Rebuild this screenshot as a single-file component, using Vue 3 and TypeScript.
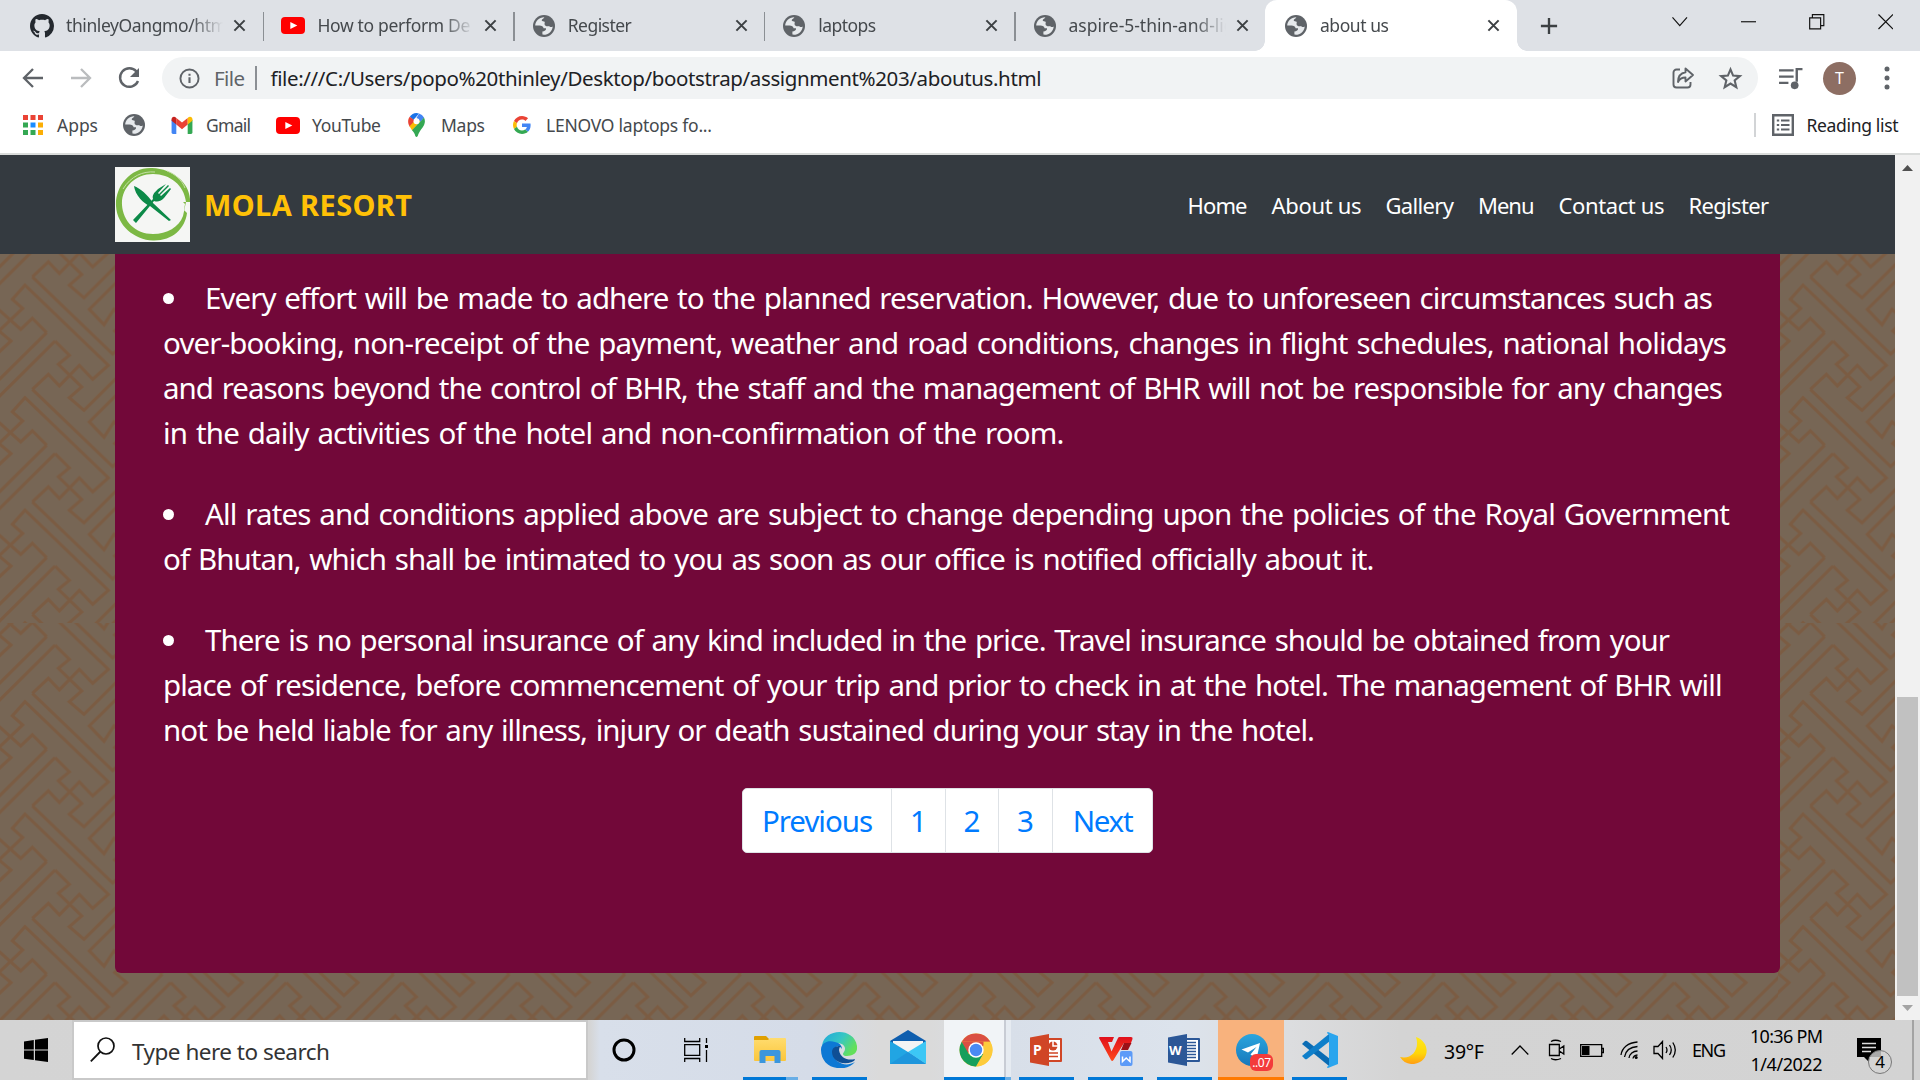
<script setup lang="ts">
import type { Directive } from 'vue'

/* Spreads a single line of text over the given width by adjusting its tracking. */
const vFit: Directive<HTMLElement, number> = {
  mounted(el, { value }) {
    const count = (el.textContent ?? '').length
    const natural = el.getBoundingClientRect().width
    if (count > 1) el.style.letterSpacing = `${(value - natural) / (count - 1)}px`
    el.style.width = `${value}px`
  },
}

interface Tab { title: string; icon: 'github' | 'youtube' | 'globe'; width: number }
const tabs: Tab[] = [
  { title: 'thinleyOangmo/htm', icon: 'github', width: 161 },
  { title: 'How to perform De', icon: 'youtube', width: 153 },
  { title: 'Register', icon: 'globe', width: 64 },
  { title: 'laptops', icon: 'globe', width: 58 },
  { title: 'aspire-5-thin-and-lig', icon: 'globe', width: 166 },
]

const links = [
  { label: 'Home', width: 60 },
  { label: 'About us', width: 90 },
  { label: 'Gallery', width: 68.5 },
  { label: 'Menu', width: 56.5 },
  { label: 'Contact us', width: 106 },
  { label: 'Register', width: 80.5 },
]

const terms = [
  [
    { text: 'Every effort will be made to adhere to the planned reservation. However, due to unforeseen circumstances such as', width: 1508 },
    { text: 'over-booking, non-receipt of the payment, weather and road conditions, changes in flight schedules, national holidays', width: 1564 },
    { text: 'and reasons beyond the control of BHR, the staff and the management of BHR will not be responsible for any changes', width: 1560 },
    { text: 'in the daily activities of the hotel and non-confirmation of the room.', width: 901.5 },
  ],
  [
    { text: 'All rates and conditions applied above are subject to change depending upon the policies of the Royal Government', width: 1525 },
    { text: 'of Bhutan, which shall be intimated to you as soon as our office is notified officially about it.', width: 1211.5 },
  ],
  [
    { text: 'There is no personal insurance of any kind included in the price. Travel insurance should be obtained from your', width: 1465 },
    { text: 'place of residence, before commencement of your trip and prior to check in at the hotel. The management of BHR will', width: 1559.5 },
    { text: 'not be held liable for any illness, injury or death sustained during your stay in the hotel.', width: 1152 },
  ],
]

const pages = [
  { label: 'Previous', box: 149, width: 111 },
  { label: '1', box: 54, width: 0 },
  { label: '2', box: 53, width: 0 },
  { label: '3', box: 54, width: 0 },
  { label: 'Next', box: 99, width: 61 },
]

const tileOffsets = [-1, 0, 1, 2].flatMap((i) => [-2, -1, 0, 1, 2].map((j) => ({ x: i * 347, y: j * 337.5 })))
</script>

<template>
  <div class="screen">
    <svg class="defs" width="0" height="0" aria-hidden="true">
      <defs>
        <symbol id="i-globe" viewBox="0 0 22 22">
          <circle cx="11" cy="11" r="11" fill="#5f6368" />
          <path d="M11.4 2.2C6.400 2 2.300 6 2.200 10.500h4.200c2.400 0 3.800 1 4.200 2.800h2.400c.4 2.200-1.600 3-3.600 3.200v3.100c5 .8 10-3 10.300-8.200-1.300 1.200-3 .8-3.600-.4-1.300.5-4.300.4-4.500-1.500-.2-1.200.5-2.200 0-2.700-.9-.5-2.600-.2-2.900-1.300 0-1.700 1.900-1.600 2.700-3.300z" fill="#e6e9ec" />
        </symbol>
        <symbol id="i-yt" viewBox="0 0 24 17">
          <rect width="24" height="17" rx="4" fill="#f00" />
          <path d="M9.300 5l7 3.500-7 3.500z" fill="#fff" />
        </symbol>
        <symbol id="i-x" viewBox="0 0 14 14">
          <path d="M1.500 1.500l11 11M12.500 1.500l-11 11" stroke="#3c4043" stroke-width="2.200" fill="none" />
        </symbol>
        <linearGradient id="edgeTop" x1="0" y1="0" x2="1" y2=".5"><stop offset="0" stop-color="#1fa7dc" /><stop offset=".55" stop-color="#36c6c4" /><stop offset="1" stop-color="#63e05a" /></linearGradient>
        <linearGradient id="moon" x1="0" y1="0" x2="0" y2="1"><stop offset="0" stop-color="#ffe81a" /><stop offset=".6" stop-color="#ffd60a" /><stop offset="1" stop-color="#ff9d14" /></linearGradient>
        <linearGradient id="wps" x1="0" y1="0" x2="0" y2="1"><stop offset="0" stop-color="#e0101c" /><stop offset="1" stop-color="#ff4a1c" /></linearGradient>
        <linearGradient id="tg" x1="0" y1="0" x2="0" y2="1"><stop offset="0" stop-color="#2ba5de" /><stop offset="1" stop-color="#1778bb" /></linearGradient>
        <linearGradient id="folder" x1="0" y1="0" x2="0" y2="1"><stop offset="0" stop-color="#ffdc6e" /><stop offset="1" stop-color="#fbc63c" /></linearGradient>
      </defs>
    </svg>

    <header class="tabs">
      <div v-for="t in tabs" :key="t.title" class="tab">
        <svg v-if="t.icon === 'github'" class="fav gh" viewBox="0 0 16 16"><path fill="#24292f" d="M8 0C3.580 0 0 3.580 0 8c0 3.540 2.290 6.530 5.470 7.590.4.07.55-.17.55-.38 0-.19-.01-.82-.01-1.490-2.010.37-2.530-.49-2.690-.94-.09-.23-.48-.94-.82-1.130-.28-.15-.68-.52-.01-.53.63-.01 1.080.58 1.230.82.72 1.210 1.870.87 2.330.66.07-.52.28-.87.51-1.070-1.780-.2-3.640-.89-3.640-3.950 0-.87.31-1.590.82-2.150-.08-.2-.36-1.020.08-2.120 0 0 .67-.21 2.200.82.64-.18 1.320-.27 2-.27s1.360.09 2 .27c1.530-1.040 2.200-.82 2.200-.82.44 1.100.16 1.920.08 2.120.51.56.82 1.270.82 2.150 0 3.070-1.870 3.750-3.650 3.950.29.25.54.73.54 1.480 0 1.070-.01 1.930-.01 2.200 0 .21.15.46.55.38A8.010 8.010 0 0 0 16 8c0-4.420-3.580-8-8-8z" /></svg>
        <svg v-else-if="t.icon === 'youtube'" class="fav yt"><use href="#i-yt" /></svg>
        <svg v-else class="fav"><use href="#i-globe" /></svg>
        <div class="tab-title"><span v-fit="t.width">{{ t.title }}</span></div>
        <svg class="x"><use href="#i-x" /></svg>
      </div>
      <div class="tab active">
        <svg class="fav"><use href="#i-globe" /></svg>
        <div class="tab-title"><span v-fit="69">about us</span></div>
        <svg class="x"><use href="#i-x" /></svg>
      </div>
      <svg class="plus" viewBox="0 0 20 20"><path d="M10 1v18M1 10h18" stroke="#3c4043" stroke-width="2.600" /></svg>
      <div class="win">
        <svg viewBox="0 0 16 16"><path d="M.5 3.500L8 12l7.500-8.500" /></svg>
        <svg viewBox="0 0 16 16"><path d="M0 8h16" /></svg>
        <svg viewBox="0 0 16 16"><path d="M.7 4h11.300v11.300H.7zM3.500 4V.7h11.800V12H12" /></svg>
        <svg viewBox="0 0 16 16"><path d="M.5.5l15 15M15.500.5l-15 15" /></svg>
      </div>
    </header>

    <div class="toolbar">
      <svg class="nav-i" viewBox="0 0 24 24"><path d="M22 12H3M12 3l-9 9 9 9" fill="none" stroke="#5f6368" stroke-width="2.300" /></svg>
      <svg class="nav-i" viewBox="0 0 24 24"><path d="M2 12h19M12 3l9 9-9 9" fill="none" stroke="#babcbe" stroke-width="2.300" /></svg>
      <svg class="nav-i" viewBox="0 0 24 24"><path d="M19.500 5.500A9.300 9.300 0 1 0 21 15" fill="none" stroke="#5f6368" stroke-width="2.400" /><path d="M22 2v9h-9z" fill="#5f6368" /></svg>
      <div class="omni">
        <svg class="info" viewBox="0 0 22 22"><circle cx="11" cy="11" r="9.500" fill="none" stroke="#5f6368" stroke-width="2" /><path d="M11 9.700v6M11 6v2.200" stroke="#5f6368" stroke-width="2.200" /></svg>
        <span class="file" v-fit="31">File</span>
        <i class="bar"></i>
        <span class="url" v-fit="771">file:///C:/Users/popo%20thinley/Desktop/bootstrap/assignment%203/aboutus.html</span>
        <svg class="share" viewBox="0 0 24 24" fill="none" stroke="#5f6368" stroke-width="1.900"><path d="M9 3.500H5.500A3 3 0 0 0 2.500 6.500v12a3 3 0 0 0 3 3h11a3 3 0 0 0 3-3V16" /><path d="M14.500 2.500l7.500 6.500-7.500 6.500v-4c-3.500 0-6 1.200-7.500 4.500 0-6 3-9 7.500-9.800z" stroke-linejoin="round" /></svg>
        <svg class="star" viewBox="0 0 24 24"><path d="M12 3.200l2.500 6 6.500.5-5 4.200 1.600 6.400-5.600-3.500-5.600 3.500L8 13.900 3 9.700l6.500-.5z" fill="none" stroke="#5f6368" stroke-width="2" /></svg>
      </div>
      <svg class="music" viewBox="0 0 24 24"><path d="M1 4.200h14M1 10.200h14M1 16.200h9" stroke="#5f6368" stroke-width="2.300" /><path d="M23.500 3h-5.500v12" fill="none" stroke="#5f6368" stroke-width="2.300" /><circle cx="16" cy="18.500" r="3.700" fill="#5f6368" /></svg>
      <div class="avatar">T</div>
      <svg class="dots" viewBox="0 0 6 24"><circle cx="3" cy="3" r="2.500" /><circle cx="3" cy="12" r="2.500" /><circle cx="3" cy="21" r="2.500" /></svg>
    </div>

    <div class="marks">
      <svg class="apps" viewBox="0 0 20 20">
        <path d="M0 0h5v5H0zM7.500 0h5v5h-5zM15 0h5v5h-5z" fill="#ea4335" /><path d="M0 7.500h5v5H0zM0 15h5v5H0zM7.500 15h5v5h-5z" fill="#34a853" />
        <path d="M7.500 7.500h5v5h-5z" fill="#1a8cff" /><path d="M15 7.500h5v5h-5zM15 15h5v5h-5z" fill="#fbae05" />
      </svg>
      <span class="m-apps" v-fit="41">Apps</span>
      <svg class="m-globe"><use href="#i-globe" /></svg>
      <svg class="gmail" viewBox="0 0 22 19"><path d="M0 4v13.500Q0 19 1.500 19H5V8z" fill="#4285f4" /><path d="M22 4v13.500q0 1.500-1.500 1.500H17V8z" fill="#34a853" /><path d="M5 2l6 4.900L17 2v7l-6 5-6-5z" fill="#ea4335" /><path d="M0 3.500C0 .8 2.800-.5 5 2v7L0 5z" fill="#c5221f" /><path d="M22 3.500C22 .8 19.200-.5 17 2v7l5-4z" fill="#fbbc04" /></svg>
      <span class="m-gmail" v-fit="45">Gmail</span>
      <svg class="m-yt"><use href="#i-yt" /></svg>
      <span class="m-yttext" v-fit="69">YouTube</span>
      <svg class="maps" viewBox="0 0 17 24"><path d="M1.800 3.800A8.400 8.400 0 0 1 11 .4L5.500 7z" fill="#1a73e8" /><path d="M1.800 3.800C-.8 7 0 11 1.800 13.800L11 5.500 6 7z" fill="#ea4335" /><path d="M1.500 13.300L11.800 2.800 16 4.400 4.200 17.500z" fill="#fbbc04" /><path d="M16 4.400c1.800 4 .7 7-1.400 10C12 17.800 10.500 20 9.700 23q-1.200 2-2.400 0C6.800 20.500 5.500 19 4 17.300z" fill="#34a853" /><path d="M11 .4a8.400 8.400 0 0 1 5 4l-3.500 4.200L8.500 5z" fill="#4285f4" /><circle cx="8.500" cy="8.300" r="3" fill="#fff" /></svg>
      <span class="m-maps" v-fit="44">Maps</span>
      <svg class="google" viewBox="0 0 48 48"><path fill="#EA4335" d="M24 9.500c3.540 0 6.710 1.220 9.210 3.600l6.850-6.850C35.900 2.380 30.470 0 24 0 14.620 0 6.510 5.380 2.560 13.220l7.980 6.190C12.430 13.720 17.740 9.500 24 9.500z" /><path fill="#4285F4" d="M46.980 24.550c0-1.570-.15-3.090-.38-4.550H24v9.020h12.940c-.58 2.960-2.260 5.480-4.780 7.180l7.730 6c4.510-4.180 7.090-10.360 7.090-17.650z" /><path fill="#FBBC05" d="M10.530 28.590A14.500 14.500 0 0 1 9.770 24c0-1.600.27-3.140.76-4.590l-7.980-6.190A23.900 23.900 0 0 0 0 24c0 3.880.92 7.540 2.560 10.780z" /><path fill="#34A853" d="M24 48c6.480 0 11.930-2.130 15.890-5.810l-7.730-6c-2.150 1.450-4.920 2.300-8.160 2.300-6.260 0-11.570-4.220-13.470-9.910l-7.980 6.190C6.510 42.620 14.620 48 24 48z" /></svg>
      <span class="m-lenovo" v-fit="166">LENOVO laptops fo...</span>
      <i class="m-sep"></i>
      <svg class="reading" viewBox="0 0 22 22"><path d="M1.200 1.200h19.600v19.600H1.200z" fill="none" stroke="#5f6368" stroke-width="2.400" /><path d="M4.800 6.500h2.400M4.800 11h2.400M4.800 15.500h2.400M9 6.500h8.500M9 11h8.500M9 15.500h8.500" stroke="#5f6368" stroke-width="2.200" /></svg>
      <span class="m-read" v-fit="92">Reading list</span>
    </div>

    <div class="view">
      <main class="page">
        <svg class="weave" width="1895" height="865">
          <defs>
            <pattern id="weave" patternUnits="userSpaceOnUse" width="347" height="337.5" patternTransform="scale(.33333)">
              <rect width="347" height="337.500" fill="#776655" />
              <g fill="none" stroke="#7b5c43" stroke-width="9.500">
                <g v-for="(o, i) in tileOffsets" :key="i" :transform="`translate(${o.x} ${o.y})`">
                  <path d="M-250 317.500L-9 549 33 510-3 480 68 412 37 385 75 342.500 325 583 278 625 238 583 178 645 145 610 97 655" />
                  <path d="M140 485L97 442 62 475-5 415-35 461-79 415 165 173" />
                  <path d="M165 510L208 553 175 580 245 648 208 680 252 718 487 485" />
                </g>
              </g>
            </pattern>
          </defs>
          <g transform="translate(0 128.500)"><rect y="-130" width="1778" height="470" fill="url(#weave)" /></g>
          <g transform="translate(1778 128.500)"><rect y="-130" width="118" height="470" fill="url(#weave)" /></g>
          <g transform="translate(0 545)"><rect y="-77" width="1778" height="400" fill="url(#weave)" /></g>
          <g transform="translate(1778 545)"><rect y="-77" width="118" height="400" fill="url(#weave)" /></g>
        </svg>
        <nav class="navbar">
          <svg class="logo" viewBox="0 0 75 75">
            <rect width="75" height="75" fill="#f5f6f4" />
            <path d="M37 1C15 0 0 20 1 39c1 19 18 34 37 34.500C57 74 70 62 72 46l-3-3 1-6-2-2 7 0C76 18 60 2 37 1zM38 7c17 0 31 11 33 28l-3 14c-4 11-16 18-30 18C20 67 8 54 7 38 6 21 20 7 38 7z" fill="#7cb844" fill-rule="evenodd" />
            <path d="M8 22C16 9 28 4 40 5M52 4c8 3 15 9 18 17" fill="none" stroke="#c5dfa8" stroke-width="1" />
            <path d="M19 19c6 2 14 9 19 17l18 17-2 1-19-15c-6-2-15-11-16-20z" fill="#0c8a48" />
            <path d="M18 53l20-21c-1-4 1-6 5-10l8-5-8 9 1 1 9-9 1 1-9 9 1 1 9-8 1 1-7 9c-4 4-7 4-10 3L21 56z" fill="#0c8a48" />
          </svg>
          <span class="brand" v-fit="208">MOLA RESORT</span>
          <div class="links"><a v-for="l in links" :key="l.label" v-fit="l.width">{{ l.label }}</a></div>
        </nav>
        <section class="panel">
          <ul>
            <li v-for="(lines, i) in terms" :key="i">
              <div v-for="(line, j) in lines" :key="j" class="line"><b v-if="j === 0"></b><span v-fit="line.width">{{ line.text }}</span></div>
            </li>
          </ul>
          <div class="pagination">
            <a v-for="p in pages" :key="p.label" :style="{ width: p.box + 'px' }"><span v-if="p.width" v-fit="p.width">{{ p.label }}</span><template v-else>{{ p.label }}</template></a>
          </div>
        </section>
      </main>
      <aside class="scroll">
        <svg class="arr" viewBox="0 0 11 6"><path d="M0 6L5.500 0 11 6z" fill="#505050" /></svg>
        <i class="thumb"></i>
        <svg class="arr down" viewBox="0 0 11 6"><path d="M0 0h11L5.500 6z" fill="#a3a3a3" /></svg>
      </aside>
    </div>

    <footer class="taskbar">
      <div class="start"><svg width="24" height="24" viewBox="0 0 24 24"><path d="M0 3.400L9.800 2v9.500H0zM11 1.800L24 0v11.500H11zM0 12.600h9.800V22L0 20.700zM11 12.600h13V24l-13-1.800z" /></svg></div>
      <div class="search">
        <svg width="25" height="25" viewBox="0 0 25 25"><circle cx="16" cy="9" r="8" fill="none" stroke="#111" stroke-width="1.700" /><path d="M10.500 14.500L.8 24.300" stroke="#111" stroke-width="1.800" /></svg>
        <span v-fit="198">Type here to search</span>
      </div>
      <div class="task cortana"><svg width="24" height="24" viewBox="0 0 24 24"><circle cx="12" cy="12" r="10" fill="none" stroke="#000" stroke-width="3" /></svg></div>
      <div class="task view-i"><svg width="24" height="24" viewBox="0 0 24 24" fill="none" stroke="#000" stroke-width="1.300"><path d="M.7 0v3.500h15V0M.7 24v-3.500h15V24M.7 6.700h15v10.600H.7zM22.500 0v5M22.500 12v12" /><path d="M21 7h3v3h-3z" fill="#000" stroke="none" /></svg></div>
      <div class="task on duo">
        <svg class="folder-i" width="32" height="28" viewBox="0 0 32 28"><path d="M0 1q0-1 1-1h11l3 3v4H0z" fill="#e0a000" /><path d="M0 4h14l2-2h15q1 0 1 1v21q0 1-1 1H1q-1 0-1-1z" fill="url(#folder)" /><path d="M5.500 27V16q0-2 2-2h17q2 0 2 2v11h-6v-7h-9v7z" fill="#3a96dd" /></svg>
      </div>
      <div class="task on edge">
        <svg width="36" height="36" viewBox="0 0 36 36"><path d="M1 14C3-4 33-5 36 14c1 7-4 10-10 10-4 0-5-2-3-4 3-5-1-9-7-9C9 10 3 11 1 14z" fill="url(#edgeTop)" /><path d="M0 18C0 10 8 8 14 10c5 1 7 4 7 7-3-5-9-2-9 4 1 9 12 15 22 9-5 6-13 7-18 6C7 35 0 28 0 18z" fill="#0d78d4" /><path d="M11 20c0 8 9 14 20 10q3-1 3-3c-7 2-15-1-16-9q0-3 2-4c-6 0-9 2-9 6z" fill="#0f4f95" /></svg>
      </div>
      <div class="task">
        <svg class="mail-i" width="36" height="34" viewBox="0 0 36 34"><path d="M0 11L18 0l18 11v6H0z" fill="#0f5eae" /><path d="M3 11h30v12H3z" fill="#f4f4f4" /><path d="M0 11l18 11L36 34H0z" fill="#21a5e3" /><path d="M36 11L18 22l18 12z" fill="#3cc7f5" /><path d="M0 34l18-12 18 12z" fill="#1e96dc" /></svg>
      </div>
      <div class="task on chrome">
        <svg width="34" height="34" viewBox="0 0 34 34"><circle cx="17" cy="17" r="16.500" fill="#fdcb3c" /><path d="M2.700 8.700A16.500 16.500 0 0 1 31.300 8.700H17z" fill="#da4f43" /><path d="M17 8.700h14.300L17 17 8 20 2.700 8.700z" fill="#da4f43" /><path d="M2.700 8.700L9.800 21 17 25l-.5 8.500A16.500 16.500 0 0 1 2.700 8.700z" fill="#169f5c" /><path d="M17 33.500l7.200-12.400L15 22l-4 10z" fill="#169f5c" /><path d="M17.500 33.500l7-12.400V8.700h6.800A16.500 16.500 0 0 1 17.500 33.500z" fill="#fdcb3c" /><circle cx="17" cy="17" r="7.700" fill="#fff" /><circle cx="17" cy="17" r="6.200" fill="#4a8af4" /></svg>
      </div>
      <div class="task on app">
        <svg width="33" height="32" viewBox="0 0 33 32"><rect x="14" y="4" width="18" height="24" rx="1" fill="#d04626" /><rect x="16" y="6" width="14" height="20" fill="#fff" /><circle cx="23" cy="12" r="4.500" fill="#d04626" /><path d="M23 6.500v5.500h5" stroke="#fff" stroke-width="1.500" fill="none" /><path d="M19 19h9M19 22.500h9" stroke="#d04626" stroke-width="1.500" /><path d="M0 3.500L19 0v32L0 28.500z" fill="#d04626" /></svg><em>P</em>
      </div>
      <div class="task on app">
        <svg width="34" height="34" viewBox="0 0 34 34"><path d="M0 5q0-1 1-1h14l-2 5H9l3.500 9.500L19 5q.5-1 1.500-1H32q2 0 1.500 2L32 10h-7L14.500 27q-1.500 2-2.500 0z" fill="url(#wps)" /><path d="M25 10h7.500L29 17h-7z" fill="#9c1018" /><rect x="21" y="18" width="12.500" height="15" rx="2" fill="#5c9bf8" /><path d="M23.500 23.500v5l3.700-3.500 3.800 3.500v-5" stroke="#fff" stroke-width="1.500" fill="none" /></svg>
      </div>
      <div class="task on app">
        <svg width="33" height="32" viewBox="0 0 33 32"><rect x="14" y="4" width="18" height="24" rx="1" fill="#2b5797" /><rect x="16" y="6" width="14" height="20" fill="#fff" /><path d="M19 8.500h9M19 11.500h9M19 14.500h9M19 17.500h9M19 20.500h9M19 23.500h9" stroke="#2b5797" stroke-width="1.400" /><path d="M0 3.500L19 0v32L0 28.500z" fill="#2b5797" /></svg><em class="w">W</em>
      </div>
      <div class="task on tele">
        <svg width="32" height="32" viewBox="0 0 32 32"><circle cx="16" cy="16" r="16" fill="url(#tg)" /><path d="M5.500 15.500L24 9l-3.500 16-6-4.500 6-7.500-8.500 5.500z" fill="#fff" /></svg>
        <span class="badge">..07</span>
      </div>
      <div class="task on app code">
        <svg width="36" height="36" viewBox="0 0 36 36"><path d="M0 12l3-3q1-.7 2 0l23 18-1 7z" fill="#0a6cb4" /><path d="M0 24l3 3q1 .7 2 0L28 9l-1-7z" fill="#0f7fca" /><path d="M26 0l10 4v28l-10 4q-1 0-1-1l2-2V3l-2-2q0-1 1-1z" fill="#2aa5ee" /></svg>
      </div>

      <div class="tray">
        <svg class="moon" viewBox="0 0 27 27"><path d="M16 0c15 5 14 25-2 27C8 27.500 3 25 0 20c12 3 20-8 16-20z" fill="url(#moon)" /></svg>
        <span class="temp" v-fit="40">39°F</span>
        <svg class="up" viewBox="0 0 18 10"><path d="M.7 9.500L9 1l8.300 8.500" /></svg>
        <svg class="cam" viewBox="0 0 17 22"><path d="M1.500 5.500h9.800v11H1.500zM11.300 10l4.500-3v8l-4.500-3M3 2.500Q7 0 13 2.500M3 19.500q4 2.500 10 0" /></svg>
        <svg class="bat" viewBox="0 0 24 13"><path d="M.7.7h21v11.600h-21zM22 4.500h1.400v4H22" /><path d="M2 2h7.500v9H2z" fill="#000" stroke="none" /></svg>
        <svg class="wifi" viewBox="0 0 18 18"><path d="M1 14C2 7 8 1.500 17.500 1M4.500 16C5.500 10 10 6 17.500 5.500M9 17c.5-4 4-7 8.500-7M13 17.500q.5-3 4.500-3.500" /><circle cx="16.200" cy="16.500" r="1.500" fill="#000" stroke="none" /></svg>
        <svg class="vol" viewBox="0 0 24 20"><path d="M1 6.500h4L9.500 1.500v17L5 13.500H1zM13 7q2 3 0 6M16.500 5q3.500 5 0 10M19.800 2.500q5 7.500 0 15" /></svg>
        <span class="eng" v-fit="34">ENG</span>
        <div class="clock"><span v-fit="73">10:36 PM</span><span v-fit="72">1/4/2022</span></div>
        <div class="note">
          <svg width="25" height="24" viewBox="0 0 25 24"><path d="M0 0h24v19H12v5l-5-5H0z" /><path d="M5 5.500h14M5 9.500h14M5 13.500h9" stroke="#ddd" stroke-width="1.300" /></svg>
          <span>4</span>
        </div>
        <i class="peek"></i>
      </div>
    </footer>
  </div>
</template>

<style>
body { margin: 0; overflow: hidden; }
</style>

<style scoped>
.screen { width: 1920px; height: 1080px; display: flex; flex-direction: column; overflow: hidden; background: #fff; font-family: "Noto Sans", "Open Sans", sans-serif; }
.screen *, .screen { box-sizing: border-box; }
.defs { position: absolute; }
svg { flex: none; display: block; }
span, a { flex: none; display: inline-block; white-space: nowrap; }

.tabs { height: 51px; flex: none; display: flex; background: #dee1e6; padding-left: 14px; color: #45494d; font-size: 17.5px; }
.tab { width: 250.4px; flex: none; display: flex; align-items: center; padding-left: 16px; position: relative; }
.tab::after { content: ""; position: absolute; right: 0; top: 12px; width: 1.5px; height: 29px; background: #8b8f94; }
.tab:nth-of-type(5)::after { display: none; }
.fav { width: 22px; height: 22px; margin-right: 13px; margin-left: 2px; }
.gh { width: 24px; height: 24px; margin: 0 12px 0 0; }
.yt { width: 24px; height: 17px; margin: 0 12px 0 1px; }
.tab-title { width: 167px; line-height: 28px; height: 28px; padding-bottom: 1px; margin-top: -2px; -webkit-mask-image: linear-gradient(90deg, #000 125px, transparent 157px); flex: none; }
.x { width: 13px; height: 13px; margin-left: 0; }
.active { width: 252px; margin-left: -1px; padding-left: 18px; background: #fff; border-radius: 12px 12px 0 0; }
.active::before { content: ""; position: absolute; left: -10px; bottom: 0; width: 10px; height: 10px; background: radial-gradient(circle at 0 0, transparent 9.5px, #fff 10px); }
.active::after { right: -10px; top: auto; bottom: 0; width: 10px; height: 10px; background: radial-gradient(circle at 100% 0, transparent 9.5px, #fff 10px); }
.plus { width: 18px; height: 18px; margin: 16.5px 0 0 23px; }
.win { display: flex; gap: 53px; margin: 14px 0 0 auto; padding-right: 27px; }
.win svg { width: 15.5px; height: 15.5px; fill: none; stroke: #111; stroke-width: 1.2; }

.toolbar { height: 54px; flex: none; display: flex; align-items: center; padding-left: 21px; }
.nav-i { width: 24px; height: 24px; margin-right: 24px; }
.omni { width: 1596px; height: 42px; border-radius: 21px; background: #f1f3f4; display: flex; align-items: center; padding-left: 17px; margin-left: -3px; flex: none; font-size: 20.5px; line-height: 30px; }
.info { width: 21px; height: 21px; }
.file { color: #606468; margin-left: 14px; margin-bottom: 1px; }
.bar { width: 1.5px; height: 24px; background: #8b8f94; margin-left: 10px; }
.url { color: #202124; margin-left: 14px; margin-bottom: 1px; }
.share { width: 24px; height: 24px; margin-left: 629px; margin-bottom: 1px; }
.star { width: 25px; height: 25px; margin-left: 23px; }
.music { width: 25px; height: 25px; margin-left: 20px; }
.avatar { width: 33px; height: 33px; border-radius: 50%; background: #8d6e63; color: #fff; font-size: 16px; display: flex; align-items: center; justify-content: center; margin-left: 20px; }
.dots { width: 6px; height: 24px; margin-left: 28px; fill: #5f6368; }

.marks { height: 50px; flex: none; display: flex; align-items: center; padding: 0 0 8px 23px; border-bottom: 2px solid #dadcdb; color: #45494d; font-size: 17.5px; line-height: 24px; }
.apps { width: 20px; height: 20px; margin-right: 14px; }
.m-globe { width: 22px; height: 22px; margin: 0 26px 0 25px; }
.gmail { width: 22px; height: 18px; margin-right: 13px; }
.m-yt { width: 24px; height: 17px; margin: 0 12px 0 25px; }
.maps { width: 17px; height: 24px; margin: 0 16px 0 27px; }
.google { width: 18px; height: 18px; margin: 0 15px 0 28px; }
.m-sep { width: 1.5px; height: 24px; background: #d2d4d6; margin-left: 1042px; }
.reading { width: 22px; height: 22px; margin: 0 13px 0 16px; }
.m-read { color: #202124; }

.view { height: 865px; flex: none; display: flex; }
.page { width: 1895px; position: relative; flex: none; overflow: hidden; }
.weave { position: absolute; inset: 0; }
.navbar { position: relative; height: 99px; background: #343a40; display: flex; align-items: center; padding: 0 126px 0 115px; }
.logo { width: 75px; height: 75px; }
.brand { margin: 1px 0 0 14px; font-weight: 700; font-size: 29px; line-height: 40px; color: #ffc107; }
.links { margin-left: auto; display: flex; gap: 24px; color: #fff; font-size: 22px; line-height: 32px; }
.panel { position: relative; width: 1665px; height: 719px; margin-left: 115px; background: #720839; border-radius: 0 0 6px 6px; padding: 21px 48px 0; color: #fff; font-size: 29.5px; }
ul { list-style: none; margin: 0; padding: 0; }
li { margin-bottom: 36px; }
.line { height: 45px; line-height: 45px; display: flex; align-items: center; word-spacing: 2px; }
.line b { width: 11px; height: 11px; border-radius: 50%; background: #fff; margin: 2px 31px 0 0; flex: none; }
.pagination { width: 411px; height: 65px; margin-left: 579px; display: flex; background: #fff; border: 1px solid #dee2e6; border-radius: 5px; color: #007bff; }
.pagination a { text-align: center; line-height: 64px; border-right: 1px solid #dee2e6; height: 63px; }
.pagination a:last-child { border-right: 0; }
.scroll { width: 25px; background: #f1f1f1; display: flex; flex-direction: column; align-items: center; }
.arr { width: 11px; height: 6px; margin-top: 10px; }
.thumb { width: 21px; height: 299px; background: #c1c1c1; margin-top: 526px; }
.down { margin-top: 9px; }

.taskbar { height: 60px; flex: none; display: flex; background: linear-gradient(90deg, #d4d4d4 0, #d5d5d5 590px, #d8dfea 600px, #d5dce8 810px, #dadada 880px, #dadada 930px, #d8dfe9 1010px, #dce3ec 1180px, #dcdddf 1290px, #d4d4d4 1400px, #d3d3d3 100%); }
.start { width: 72px; display: flex; align-items: center; padding-left: 24px; }
.search { width: 516px; background: #fff; border: 2px solid #c9c9c9; display: flex; align-items: center; padding-left: 16px; font-size: 22.5px; color: #333; }
.search svg { margin: 0 17px 2px 0; }
.search span { margin-top: 3px; }
.task { position: relative; display: flex; align-items: center; justify-content: center; flex: none; width: 69px; }
.cortana { width: 72px; }
.view-i { width: 71px; }
.task.on::after { content: ""; position: absolute; bottom: 0; left: 12px; width: 55px; height: 3px; background: #0078d7; }
.task.duo::after { background: linear-gradient(90deg, #0078d7 43px, #69aee6 43px); }
.folder-i { margin-left: 9px; }
.edge > svg { margin-left: 8px; }
.mail-i { margin-left: 8px; margin-bottom: 6px; }
.chrome { width: 67px; margin-left: 6px; background: linear-gradient(90deg, #f1f4f7 60px, #c8ccd4 60px, #c8ccd4 62px, #e6ebf1 62px); }
.chrome > svg { margin-right: 3px; }
.task.chrome::after { left: 0; width: 67px; background: linear-gradient(90deg, #0078d7 61px, #69aee6 61px); }
.app > svg { margin-left: 2px; }
.task.app::after { left: 8px; }
.task em { position: absolute; left: 22px; top: 20px; font: 700 14px/20px "Noto Sans", sans-serif; color: #fff; }
.task em.w { left: 20px; font-size: 13px; }
.tele { width: 66px; background: #f8b27d; }
.tele > svg { margin-left: 2px; }
.task.tele::after { left: 0; width: 66px; background: #ff7a00; }
.badge { position: absolute; left: 32px; top: 34px; width: 23px; height: 17px; border-radius: 6px; background: #f33b3b; color: #fff; font-size: 12px; line-height: 17px; text-align: center; letter-spacing: -.4px; }
.tray { flex: 1; display: flex; align-items: center; color: #000; font-size: 18px; }
.tray svg { fill: none; stroke: #000; stroke-width: 1.3; }
.tray .moon { width: 27px; height: 27px; stroke: none; margin-left: 47px; }
.temp { font-size: 19.5px; margin: 3px 0 0 17px; }
.up { width: 18px; height: 10px; margin-left: 27px; }
.cam { width: 17px; height: 22px; margin-left: 19px; }
.bat { width: 24px; height: 13px; margin-left: 15px; }
.wifi { width: 18px; height: 18px; margin-left: 16px; }
.vol { width: 24px; height: 20px; margin-left: 15px; }
.eng { margin-left: 15px; }
.clock { width: 73px; margin-left: 24px; display: flex; flex-direction: column; align-items: center; line-height: 28px; }
.note { position: relative; width: 37px; height: 36px; margin-left: 34px; padding-top: 6px; }
.note svg { stroke: none; fill: #000; }
.note span { position: absolute; left: 11px; top: 18px; width: 24px; height: 24px; border: 1px solid #777; border-radius: 50%; background: #d4d4d4cc; text-align: center; font-size: 17px; line-height: 22px; }
.peek { width: 1.5px; height: 60px; background: #a3a3a3; margin-left: 18px; }
</style>
